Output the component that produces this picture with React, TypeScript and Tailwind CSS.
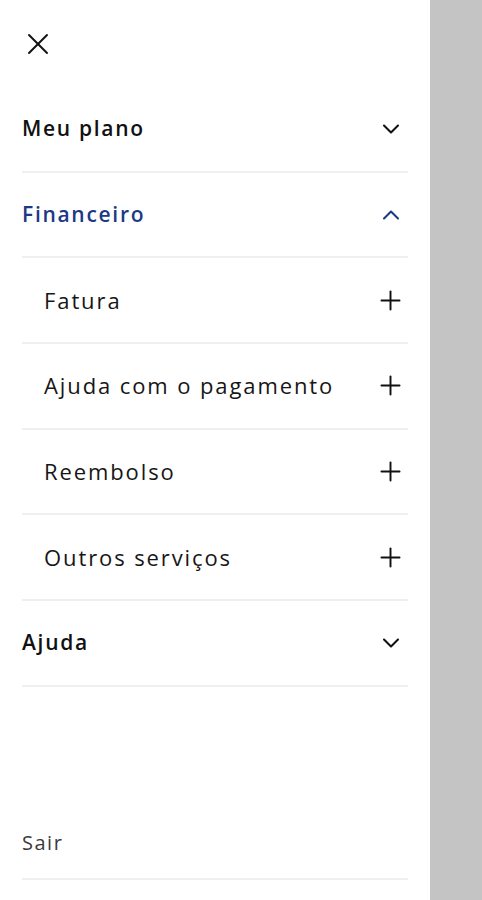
import { ChevronDown, ChevronUp, Plus, X } from 'lucide-react'

const font = { fontFamily: '"Open Sans", "Noto Sans", sans-serif' }

function Divider() {
  return <div className="h-[2px] bg-[#efefef]" />
}

function Section({ label, open = false }: { label: string; open?: boolean }) {
  return (
    <>
      <div className="flex h-[83.7px] items-center justify-between">
        <span
          className={`text-[21px] font-semibold tracking-[1.7px] ${open ? 'text-[#1b3a86]' : 'text-[#111]'}`}
        >
          {label}
        </span>
        {open ? (
          <ChevronUp className="mr-[3px] h-7 w-7 text-[#1b3a86]" strokeWidth={1.8} />
        ) : (
          <ChevronDown className="mr-[3px] h-7 w-7 text-[#111]" strokeWidth={1.8} />
        )}
      </div>
      <Divider />
    </>
  )
}

function SubItem({ label }: { label: string }) {
  return (
    <>
      <div className="flex h-[83.7px] items-center justify-between pl-[22px]">
        <span className="text-[22px] tracking-[1.9px] text-[#161616]">{label}</span>
        <Plus className="mr-[2px] h-[31px] w-[31px] text-[#111]" strokeWidth={1.5} />
      </div>
      <Divider />
    </>
  )
}

export default function App() {
  return (
    <div className="flex h-[900px] w-[482px] bg-[#c4c4c4]" style={font}>
      {/* gaveta */}
      <div className="flex w-[430px] flex-col bg-white px-[22px]">
        <div className="flex h-[87px] items-center">
          <X className="-ml-[2px] h-9 w-9 text-[#111]" strokeWidth={1.3} />
        </div>

        <Section label="Meu plano" />
        <Section label="Financeiro" open />
        <SubItem label="Fatura" />
        <SubItem label="Ajuda com o pagamento" />
        <SubItem label="Reembolso" />
        <SubItem label="Outros serviços" />
        <Section label="Ajuda" />

        <div className="flex-1" />

        {/* sair */}
        <div className="flex h-[70px] items-center">
          <span className="text-[20px] tracking-[1.5px] text-[#3a3a3a]">Sair</span>
        </div>
        <Divider />
        <div className="h-[20px]" />
      </div>
    </div>
  )
}
